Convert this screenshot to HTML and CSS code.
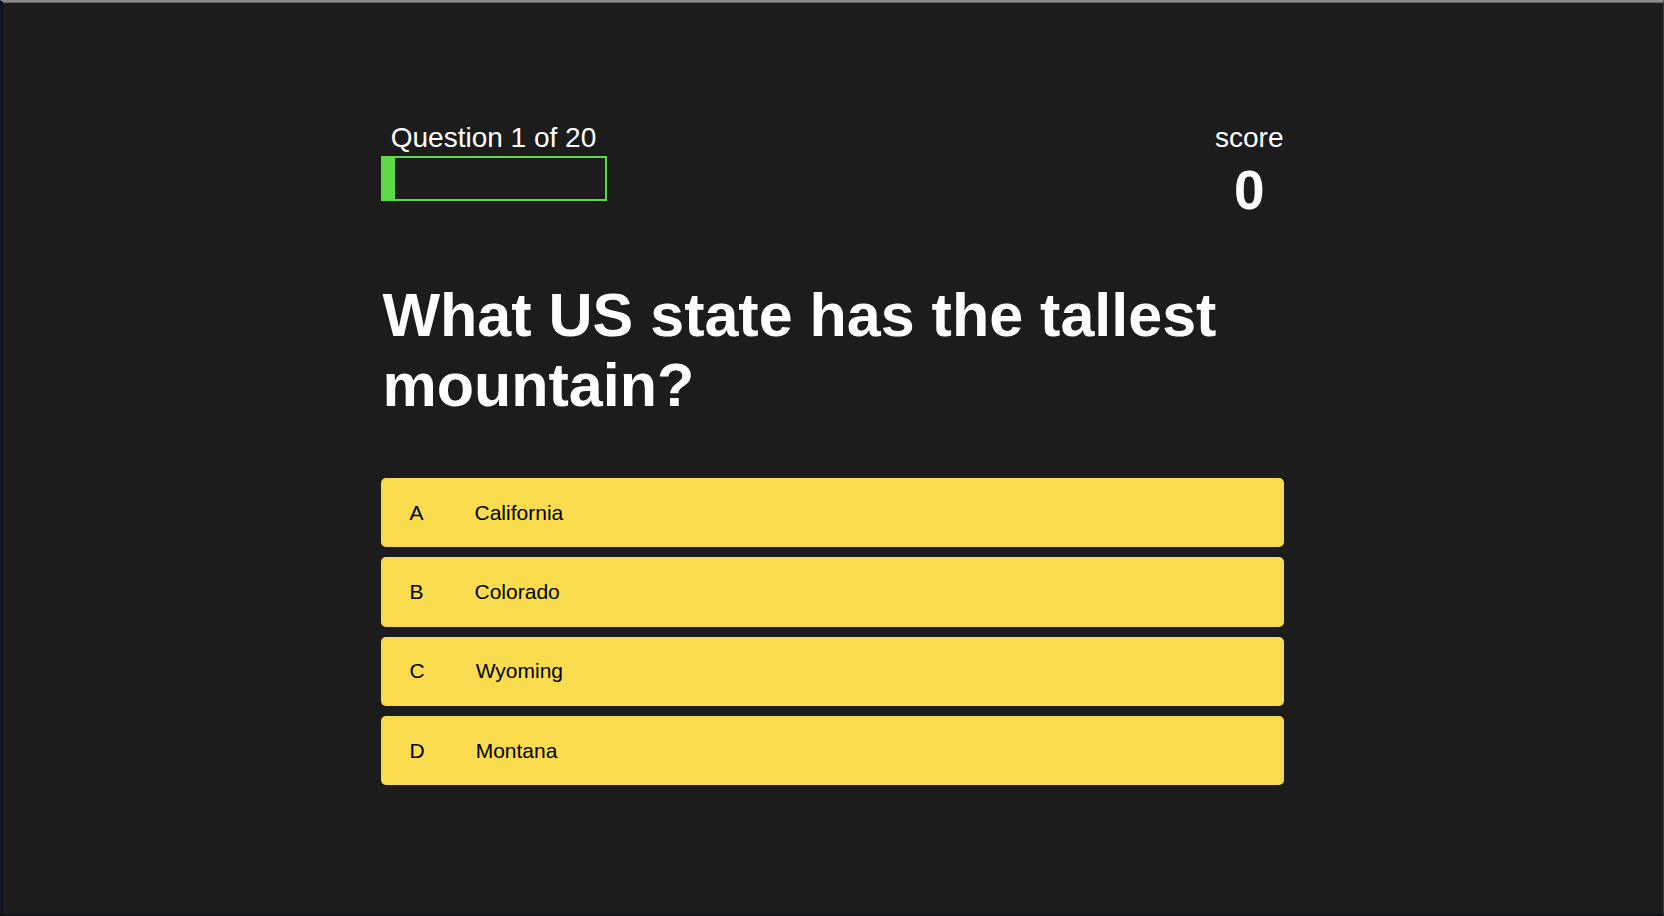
FILE: index.html
```html
<!DOCTYPE html>
<html lang="en">
<head>
<meta charset="utf-8">
<title>Quiz</title>
<link rel="stylesheet" href="styles.css">
</head>
<body>
<div class="frame">
  <main class="quiz">
    <header class="quiz-header">
      <div class="progress">
        <div class="progress-label">Question 1 of 20</div>
        <div class="progress-bar"><div class="progress-fill"></div></div>
      </div>
      <div class="score">
        <div class="score-label">score</div>
        <div class="score-value">0</div>
      </div>
    </header>
    <h1 class="question">What US state has the tallest mountain?</h1>
    <div class="options">
      <button class="option"><span class="option-letter">A</span><span class="option-text">California</span></button>
      <button class="option"><span class="option-letter">B</span><span class="option-text">Colorado</span></button>
      <button class="option"><span class="option-letter">C</span><span class="option-text">Wyoming</span></button>
      <button class="option"><span class="option-letter">D</span><span class="option-text">Montana</span></button>
    </div>
  </main>
</div>
</body>
</html>
```

FILE: styles.css
```css
html, body {
  margin: 0;
  padding: 0;
  background: #1d1c1d;
}

body {
  font-family: "Liberation Sans", Arial, sans-serif;
  color: #ffffff;
}

.frame {
  box-sizing: border-box;
  height: 916px;
  border-top: 2px solid #8a8a8a;
  border-left: 3px solid #11151b;
  border-right: 1px solid #3a3a3c;
  border-bottom: 2px solid #11151b;
  background: #1d1c1d;
  box-shadow: inset 0 1px 0 #6a6a6a;
}

.quiz {
  width: 903px;
  margin: 0 auto;
  padding-top: 120px;
  position: relative;
  left: -1px;
}

.quiz-header {
  display: flex;
  justify-content: space-between;
  align-items: flex-start;
}

.progress {
  display: flex;
  flex-direction: column;
  align-items: center;
}

.progress-label {
  font-size: 28px;
  line-height: 32px;
}

.progress-bar {
  box-sizing: border-box;
  margin-top: 2px;
  width: 226px;
  height: 45px;
  border: 2px solid #5fd84a;
}

.progress-fill {
  width: 12px;
  height: 100%;
  background: #5fd84a;
}

.score {
  display: flex;
  flex-direction: column;
  align-items: center;
}

.score-label {
  font-size: 28px;
  line-height: 32px;
}

.score-value {
  margin-top: 6px;
  font-size: 55px;
  font-weight: bold;
  line-height: 60px;
}

.question {
  margin: 60px 0 0;
  padding-left: 2px;
  font-size: 61px;
  font-weight: bold;
  line-height: 70px;
}

.options {
  margin-top: 58px;
  display: flex;
  flex-direction: column;
  gap: 10px;
}

.option {
  display: flex;
  align-items: center;
  box-sizing: border-box;
  height: 69.3px;
  padding: 0 0 0 29px;
  border: none;
  border-radius: 5px;
  background: #f8dc4d;
  color: #000000;
  font-family: "Liberation Sans", Arial, sans-serif;
  font-size: 21px;
  text-align: left;
  cursor: pointer;
}

.option-letter {
  margin-right: 51px;
}
```
